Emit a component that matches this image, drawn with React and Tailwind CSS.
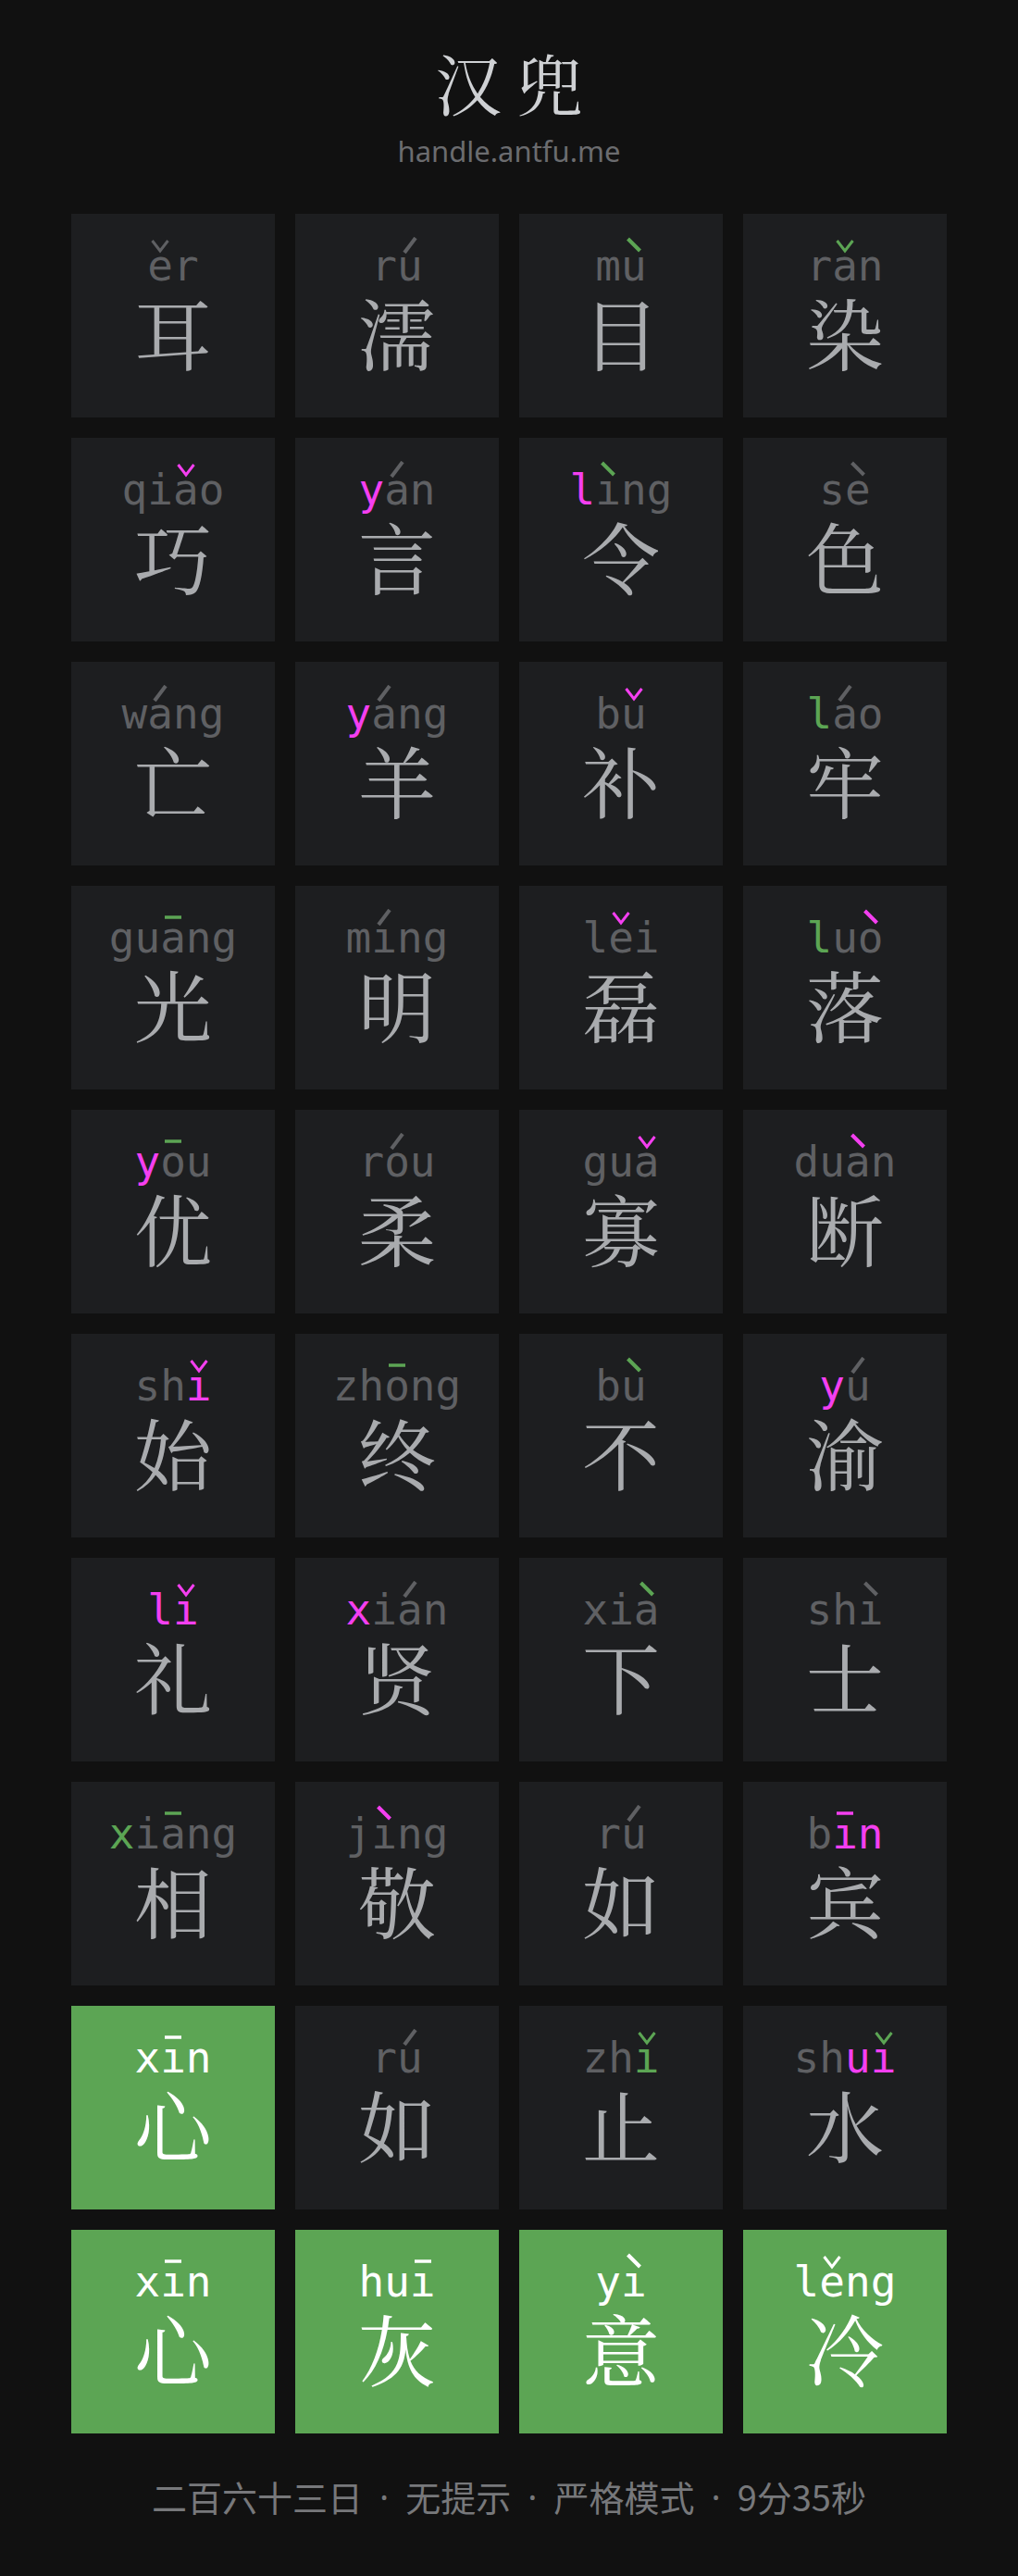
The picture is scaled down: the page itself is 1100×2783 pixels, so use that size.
const COLORS = {
  g: '#5f6063',
  m: '#f43ff0',
  G: '#5ca554',
  w: '#ffffff',
};

const TONED = {
  'ā': ['a', 1], 'á': ['a', 2], 'ǎ': ['a', 3], 'à': ['a', 4],
  'ē': ['e', 1], 'é': ['e', 2], 'ě': ['e', 3], 'è': ['e', 4],
  'ī': ['ı', 1], 'í': ['ı', 2], 'ǐ': ['ı', 3], 'ì': ['ı', 4],
  'ō': ['o', 1], 'ó': ['o', 2], 'ǒ': ['o', 3], 'ò': ['o', 4],
  'ū': ['u', 1], 'ú': ['u', 2], 'ǔ': ['u', 3], 'ù': ['u', 4],
  'ǖ': ['ü', 1], 'ǘ': ['ü', 2], 'ǚ': ['ü', 3], 'ǜ': ['ü', 4],
};

// [汉字, 拼音, 每个字母的颜色, 声调颜色, 是否全对]
const TILES = [
  ['耳', 'ěr', 'gg', 'g'], ['濡', 'rú', 'gg', 'g'], ['目', 'mù', 'gg', 'G'], ['染', 'rǎn', 'ggg', 'G'],
  ['巧', 'qiǎo', 'gggg', 'm'], ['言', 'yán', 'mgg', 'g'], ['令', 'lìng', 'mggg', 'G'], ['色', 'sè', 'gg', 'g'],
  ['亡', 'wáng', 'gggg', 'g'], ['羊', 'yáng', 'mggg', 'g'], ['补', 'bǔ', 'gg', 'm'], ['牢', 'láo', 'Ggg', 'g'],
  ['光', 'guāng', 'ggggg', 'G'], ['明', 'míng', 'gggg', 'g'], ['磊', 'lěi', 'ggg', 'm'], ['落', 'luò', 'Ggg', 'm'],
  ['优', 'yōu', 'mgg', 'G'], ['柔', 'róu', 'ggg', 'g'], ['寡', 'guǎ', 'ggg', 'm'], ['断', 'duàn', 'gggg', 'm'],
  ['始', 'shǐ', 'ggm', 'm'], ['终', 'zhōng', 'ggggg', 'G'], ['不', 'bù', 'gg', 'G'], ['渝', 'yú', 'mg', 'g'],
  ['礼', 'lǐ', 'mm', 'm'], ['贤', 'xián', 'mggg', 'g'], ['下', 'xià', 'ggg', 'G'], ['士', 'shì', 'ggg', 'g'],
  ['相', 'xiāng', 'Ggggg', 'G'], ['敬', 'jìng', 'gggg', 'm'], ['如', 'rú', 'gg', 'g'], ['宾', 'bīn', 'gmm', 'm'],
  ['心', 'xīn', 'www', 'w', true], ['如', 'rú', 'gg', 'g'], ['止', 'zhǐ', 'ggG', 'G'], ['水', 'shuǐ', 'ggmm', 'G'],
  ['心', 'xīn', 'www', 'w', true], ['灰', 'huī', 'www', 'w', true], ['意', 'yì', 'ww', 'w', true], ['冷', 'lěng', 'wwww', 'w', true],
];

function ToneMark({ tone, color, high }) {
  return (
    <svg
      className={`absolute left-1/2 -translate-x-1/2 ${high ? 'top-[-11px]' : 'top-[-8px]'}`}
      width="20"
      height="20"
      viewBox="0 0 20 20"
      fill="none"
      stroke={color}
    >
      {tone === 1 && <line x1="1" y1="9" x2="19" y2="9" strokeWidth="3.5" />}
      {tone === 2 && <line x1="4" y1="17" x2="16" y2="1" strokeWidth="4" />}
      {tone === 3 && <polyline points="1.5,4 10,15 18.5,4" strokeWidth="3" />}
      {tone === 4 && <line x1="3.5" y1="2" x2="16.5" y2="15" strokeWidth="4" />}
    </svg>
  );
}

function Pinyin({ text, colors, toneColor }) {
  const letters = [...text];
  return (
    <div className="flex h-[46px] text-[46px] leading-none font-['DejaVu_Sans_Mono',monospace]">
      {letters.map((ch, i) => {
        const toned = TONED[ch];
        const base = toned ? toned[0] : ch;
        return (
          <span key={i} className="relative inline-block" style={{ color: COLORS[colors[i]] }}>
            {base}
            {toned && <ToneMark tone={toned[1]} color={COLORS[toneColor]} high={base === 'ü'} />}
          </span>
        );
      })}
    </div>
  );
}

function Tile({ char, pinyin, colors, toneColor, done }) {
  return (
    <div
      className={`w-[220px] h-[220px] flex flex-col items-center pt-[33px] ${
        done ? 'bg-[#5ca554]' : 'bg-[#1d1e20]'
      }`}
    >
      <Pinyin text={pinyin} colors={colors} toneColor={toneColor} />
      <div
        className={`mt-[6px] text-[84px] leading-none font-['Noto_Serif_CJK_SC','Noto_Serif_SC','Noto_Sans_CJK_SC',serif] ${
          done ? 'text-white' : 'text-[#a9abae]'
        }`}
      >
        {char}
      </div>
    </div>
  );
}

function Dot() {
  return <span className="font-['Noto_Sans',sans-serif]">·</span>;
}

export default function App() {
  return (
    <div className="min-h-screen bg-[#111111] flex flex-col items-center pt-[52px]">
      {/* 标题 */}
      <h1 className="flex gap-4 text-[72px] leading-none font-normal text-[#cfd1d4] font-['Noto_Serif_CJK_SC','Noto_Serif_SC','Noto_Sans_CJK_SC',serif]">
        <span>汉</span>
        <span>兜</span>
      </h1>
      <div className="mt-[24px] text-[31px] leading-none text-[#6b6c6f] font-['Noto_Sans',sans-serif]">
        handle.antfu.me
      </div>

      {/* 格子 */}
      <div className="mt-[52px] grid grid-cols-4 gap-[22px]">
        {TILES.map(([char, pinyin, colors, toneColor, done], i) => (
          <Tile key={i} char={char} pinyin={pinyin} colors={colors} toneColor={toneColor} done={done} />
        ))}
      </div>

      {/* 底部 */}
      <div className="mt-[49px] flex items-center gap-[18px] text-[38px] leading-none text-[#77787b] font-['Noto_Sans_CJK_SC',sans-serif]">
        <span>二百六十三日</span>
        <Dot />
        <span>无提示</span>
        <Dot />
        <span>严格模式</span>
        <Dot />
        <span>9分35秒</span>
      </div>
    </div>
  );
}
